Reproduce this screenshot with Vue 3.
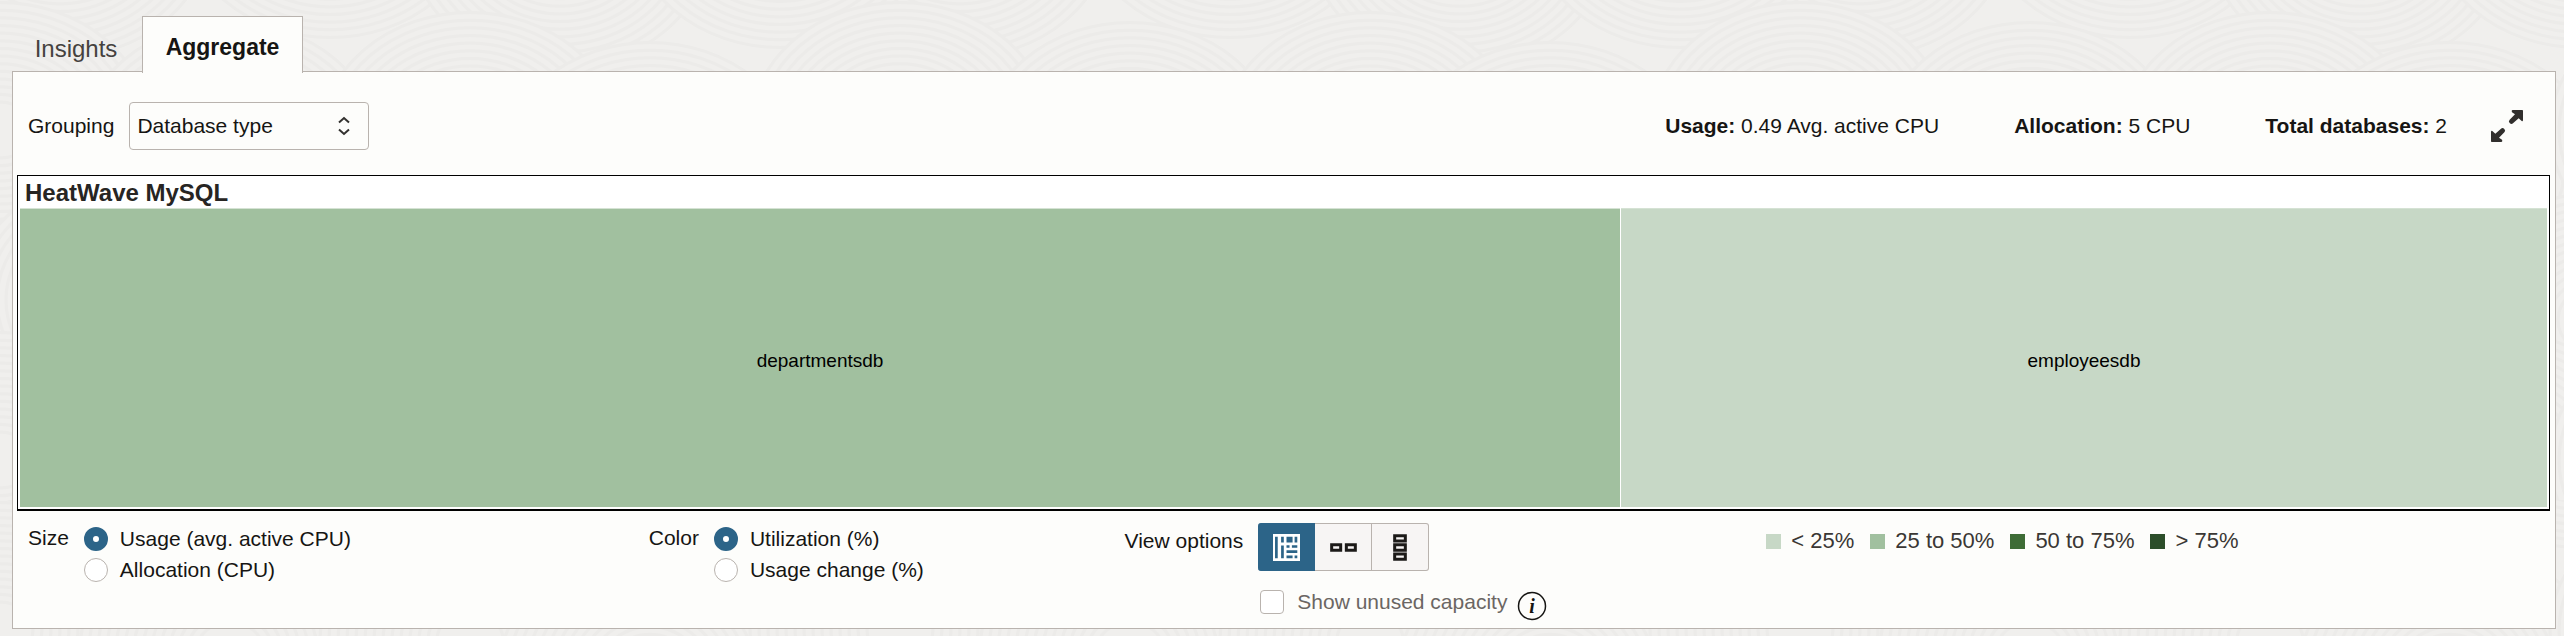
<script setup>
import { ref } from 'vue'

const grouping = ref('Database type')
const size = ref('usage')
const color = ref('utilization')
const view = ref('treemap')
const showUnused = ref(false)

const metrics = [
  { name: 'Usage:', value: '0.49 Avg. active CPU' },
  { name: 'Allocation:', value: '5 CPU' },
  { name: 'Total databases:', value: '2' }
]

const cells = [
  { name: 'departmentsdb', share: 1600, level: 'mid' },
  { name: 'employeesdb', share: 926, level: 'low' }
]

const sizeOptions = [
  { id: 'usage', label: 'Usage (avg. active CPU)' },
  { id: 'allocation', label: 'Allocation (CPU)' }
]
const colorOptions = [
  { id: 'utilization', label: 'Utilization (%)' },
  { id: 'change', label: 'Usage change (%)' }
]

const legend = [
  { label: '< 25%', level: 'low' },
  { label: '25 to 50%', level: 'mid' },
  { label: '50 to 75%', level: 'high' },
  { label: '> 75%', level: 'max' }
]

// Overlapping ripple discs that tile into the page texture
const discs = [
  [60, -70], [330, -90], [560, -60], [780, -80],
  [0, 130], [230, 150], [470, 140], [650, 170], [900, 130],
  [120, 300], [380, 310], [590, 290], [800, 320],
  [0, 460], [260, 450], [480, 470], [700, 460], [900, 460]
]
const rings = [150, 141, 132, 123, 114, 105, 96, 87, 78, 69, 60, 51, 42, 33]
</script>

<template>
  <div class="page">
    <svg class="texture" aria-hidden="true">
      <defs>
        <pattern id="ripples" width="900" height="500" patternUnits="userSpaceOnUse">
          <g v-for="(d, i) in discs" :key="i">
            <ellipse
              v-for="r in rings" :key="r" :cx="d[0]" :cy="d[1]" :rx="r" :ry="r * 0.85"
              fill="#f0efed" stroke="#ecebe9" stroke-width="3"
            />
          </g>
        </pattern>
      </defs>
      <rect width="100%" height="100%" fill="url(#ripples)" />
    </svg>

    <div class="tabs" role="tablist">
      <button class="tab" role="tab" aria-selected="false">Insights</button>
      <button class="tab active" role="tab" aria-selected="true">Aggregate</button>
    </div>

    <main class="panel">
      <header class="toolbar">
        <label for="grouping">Grouping</label>
        <div class="select">
          <select id="grouping" v-model="grouping">
            <option>Database type</option>
            <option>Compartment</option>
          </select>
          <svg class="chevrons" width="12" height="20" viewBox="0 0 24 40" aria-hidden="true">
            <path d="M2 13 12 4 22 13M2 27 12 36 22 27" fill="none" stroke="#33312f" stroke-width="4" />
          </svg>
        </div>
        <div class="metrics">
          <span v-for="m in metrics" :key="m.name"><b>{{ m.name }}</b> {{ m.value }}</span>
        </div>
        <button class="expand" aria-label="Expand">
          <svg width="32" height="32" viewBox="0 0 96 96" fill="#312f2d" aria-hidden="true">
            <path d="M62 3Q62 0 66 0H94Q96 0 96 3V31Q95 35 92 33L83 25 66 40Q61 44 56 39 51 34 56 29L72 13 63 7Z" />
            <path d="M34 93Q34 96 30 96H2Q0 96 0 93V65Q1 61 4 63L13 71 30 56Q35 52 40 57 45 62 40 67L24 83 33 89Z" />
          </svg>
        </button>
      </header>

      <section class="treemap">
        <h2>HeatWave MySQL</h2>
        <div class="cells">
          <div v-for="c in cells" :key="c.name" class="cell" :class="c.level" :style="{ flexGrow: c.share }">
            {{ c.name }}
          </div>
        </div>
      </section>

      <footer class="controls">
        <div class="group" role="radiogroup" aria-labelledby="size-title">
          <span id="size-title" class="title">Size</span>
          <div>
            <label v-for="o in sizeOptions" :key="o.id" class="choice">
              <input v-model="size" type="radio" name="size" :value="o.id">{{ o.label }}
            </label>
          </div>
        </div>

        <div class="group" role="radiogroup" aria-labelledby="color-title">
          <span id="color-title" class="title">Color</span>
          <div>
            <label v-for="o in colorOptions" :key="o.id" class="choice">
              <input v-model="color" type="radio" name="color" :value="o.id">{{ o.label }}
            </label>
          </div>
        </div>

        <div class="group views">
          <span class="title">View options</span>
          <div>
            <div class="buttons">
              <button :class="{ on: view === 'treemap' }" aria-label="Treemap" @click="view = 'treemap'">
                <svg width="27" height="27" viewBox="0 0 80 80" aria-hidden="true">
                  <path fill="#fff" d="M0 0H80V80H0Z" />
                  <path fill="#2c6488" d="M6 8h8v64H6zM24 8h8v17h-8zM24 34h8v38h-8zM40 8h18v17H40zM64 8h8v17h-8zM40 33h9v8h-9zM56 33h16v8H56zM40 48h32v8H40zM40 64h18v8H40zM64 64h8v8h-8z" />
                </svg>
              </button>
              <button :class="{ on: view === 'row' }" aria-label="Horizontal" @click="view = 'row'">
                <svg width="27" height="9" viewBox="0 0 81 27" aria-hidden="true">
                  <path fill="none" stroke="#1c1a18" stroke-width="9" d="M5 5H32V22H5ZM49 5H76V22H49Z" />
                </svg>
              </button>
              <button :class="{ on: view === 'column' }" aria-label="Vertical" @click="view = 'column'">
                <svg width="14" height="27" viewBox="0 0 42 81" aria-hidden="true">
                  <path fill="none" stroke="#1c1a18" stroke-width="9" d="M5 5H37V21H5ZM5 32H37V49H5ZM5 60H37V76H5Z" />
                </svg>
              </button>
            </div>
            <div class="unused">
              <label class="check"><input v-model="showUnused" type="checkbox" disabled>Show unused capacity</label>
              <button class="info" aria-label="Information">
                <svg width="30" height="30" viewBox="0 0 60 60" aria-hidden="true">
                  <circle cx="30" cy="30" r="27" fill="none" stroke="#161513" stroke-width="3" />
                  <text x="30" y="43" text-anchor="middle" fill="#161513">i</text>
                </svg>
              </button>
            </div>
          </div>
        </div>

        <ul class="legend">
          <li v-for="l in legend" :key="l.label"><span class="swatch" :class="l.level" />{{ l.label }}</li>
        </ul>
      </footer>
    </main>
  </div>
</template>

<style>
body { background: #f0efed; }
</style>

<style scoped>
* { box-sizing: border-box; }
.page {
  position: relative;
  isolation: isolate;
  min-height: 100vh;
  padding: 16px 8px 7px 12px;
  color: #161513;
  font: 21px/24px "Liberation Sans", Arial, sans-serif;
}
.texture {
  position: absolute;
  inset: 0;
  z-index: -1;
  width: 100%;
  height: 100%;
}
button, select {
  font: inherit;
  color: inherit;
  cursor: pointer;
}
.tabs {
  display: flex;
}
.tab {
  width: 130px;
  height: 57px;
  padding: 8px 2px 0 0;
  border: 0;
  background: none;
  color: #45423f;
  font-size: 24px;
}
.tab.active {
  position: relative;
  width: 161px;
  padding: 4px 0 0;
  border: 1px solid #b9b3ae;
  border-bottom: 0;
  background: #fdfdfb;
  color: #161513;
  font-size: 23px;
  font-weight: bold;
}
.panel {
  margin-top: -2px;
  border: 1px solid #b9b3ae;
  background: #fdfdfb;
}
.toolbar {
  display: flex;
  align-items: center;
  height: 103px;
  padding: 5px 32px 0 15px;
}
.select {
  position: relative;
  width: 240px;
  margin: 0 auto 0 15px;
}
select {
  appearance: none;
  display: block;
  width: 100%;
  height: 48px;
  padding: 0 40px 0 7px;
  border: 1px solid #b9b3ae;
  border-radius: 4px;
  background: #fdfdfb;
}
.chevrons {
  position: absolute;
  top: 14px;
  right: 19px;
  pointer-events: none;
}
.metrics {
  display: flex;
  gap: 75px;
  margin-right: 44px;
}
.expand {
  display: flex;
  padding: 0;
  border: 0;
  background: none;
}
.treemap {
  margin: 0 5px 0 4px;
  padding: 0 2px 2px;
  border: 1px solid #000;
  border-bottom-width: 2px;
  background: #fff;
}
h2 {
  margin: 0;
  padding: 3px 0 1px 5px;
  color: #272523;
  font-size: 24px;
  line-height: 28px;
}
.cells {
  display: flex;
  gap: 1px;
}
.cell {
  display: flex;
  align-items: center;
  justify-content: center;
  flex-basis: 0;
  height: 299px;
  padding-top: 6px;
  border-top: 1px solid #d5e2d4;
  color: #000;
  font-size: 19px;
}
.low { background: #c7d8c6; }
.mid { background: #a1c09f; }
.high { background: #3e6c36; }
.max { background: #2c4e2a; }
.controls {
  display: grid;
  grid-template-columns: 621fr 476fr 642fr 789fr;
  padding: 12px 0 4px 15px;
}
.group {
  display: flex;
  align-items: flex-start;
  gap: 15px;
}
.title { padding-top: 3px; }
.choice {
  display: flex;
  align-items: center;
  gap: 12px;
  height: 31px;
}
.choice input {
  appearance: none;
  width: 24px;
  height: 24px;
  margin: 0;
  border: 1px solid #b9b3ae;
  border-radius: 50%;
  background: #fff;
}
.choice input:checked { border: 9px solid #2c6488; }
.views .title { padding-top: 6px; }
.buttons { display: flex; }
.buttons button {
  display: flex;
  align-items: center;
  justify-content: center;
  width: 57px;
  height: 48px;
  padding: 0;
  border: 1px solid #b9b3ae;
  border-left: 0;
  background: #f7f5f4;
}
.buttons button:first-child { border-radius: 3px 0 0 3px; }
.buttons button:last-child { border-radius: 0 3px 3px 0; }
.buttons .on {
  border-color: #2c6488;
  background: #2c6488;
}
.unused {
  display: flex;
  align-items: flex-start;
  gap: 10px;
  padding: 19px 0 3px 2px;
}
.check {
  display: flex;
  align-items: center;
  gap: 13px;
  color: #6b6663;
}
.check input {
  appearance: none;
  width: 24px;
  height: 24px;
  margin: 0;
  border: 1px solid #b9b3ae;
  border-radius: 4px;
  background: #fff;
}
.info {
  display: flex;
  margin-top: 1px;
  padding: 0;
  border: 0;
  background: none;
}
.info text { font: italic bold 40px "Liberation Serif", serif; }
.legend {
  display: flex;
  gap: 16px;
  margin: 0;
  padding: 6px 0 0;
  color: #3a3734;
  font-size: 22px;
  list-style: none;
}
.legend li {
  display: flex;
  align-items: center;
  gap: 10px;
  height: 24px;
}
.swatch {
  width: 15px;
  height: 15px;
}
</style>
